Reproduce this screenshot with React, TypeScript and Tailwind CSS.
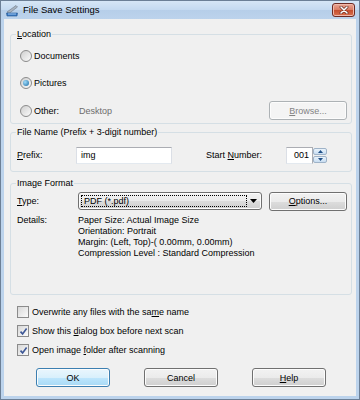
import React from 'react';

const Radio = ({ checked }: { checked?: boolean }) => (
  <span className="flex h-[12px] w-[12px] shrink-0 items-center justify-center rounded-full border border-[#8b8b8b] bg-linear-to-br from-[#cfcfcf] to-[#fbfbfb]">
    {checked && <span className="h-[6px] w-[6px] rounded-full bg-[radial-gradient(circle_at_35%_35%,#9fdcfb,#1b6aa3)]" />}
  </span>
);

const Check = ({ checked }: { checked?: boolean }) => (
  <span className="flex h-[12px] w-[12px] shrink-0 items-center justify-center border border-[#8b8b8b] bg-linear-to-br from-[#d8d8d8] to-[#fbfbfb]">
    {checked && (
      <svg width="9" height="9" viewBox="0 0 9 9">
        <path d="M1.5 4.6 L3.6 6.9 L7.6 1.6" stroke="#3d5796" strokeWidth="1.6" fill="none" />
      </svg>
    )}
  </span>
);

const Btn = ({ children, kind = 'normal', className = '' }: { children: React.ReactNode; kind?: 'normal' | 'default' | 'disabled'; className?: string }) => {
  const look =
    kind === 'default'
      ? 'border-[#3c7fb1] bg-[linear-gradient(#eaf6fd,#d9f0fc_50%,#bee6fd_50%,#a7d9f5)]'
      : kind === 'disabled'
      ? 'border-[#adb2b5] bg-[#f4f4f4] text-[#838383]'
      : 'border-[#707070] bg-[linear-gradient(#f2f2f2,#ebebeb_50%,#dddddd_50%,#cfcfcf)]';
  return (
    <div className={`flex h-[19px] items-center justify-center rounded-[3px] border shadow-[inset_0_0_0_1px_#fcfcfc] ${look} ${className}`}>
      {children}
    </div>
  );
};

const U = ({ children }: { children: React.ReactNode }) => <span className="underline underline-offset-[1px]">{children}</span>;

export default function App() {
  return (
    <div className="flex h-[400px] w-[360px] flex-col border border-[#6c7f96] bg-[#bcd3ec] font-['Liberation_Sans',Arial,sans-serif] text-[9px] leading-[12px] text-black">
      {/* Title bar */}
      <div className="flex h-[18px] items-center bg-[linear-gradient(#d6e6f6,#c4d9f0_50%,#b6cee9_50%,#bcd3ec)] pl-[4px] pr-[4px]">
        <svg width="14" height="14" viewBox="0 0 14 14">
          <path d="M2 9 L11 2.5 L12.5 4 L4 10.5 Z" fill="#a9b3bf" stroke="#6b7786" strokeWidth="0.6" />
          <path d="M1.5 10 L12.5 10 L12 13 L2 13 Z" fill="#3a78c2" stroke="#24548f" strokeWidth="0.6" />
          <path d="M3 11 L11 11" stroke="#b9dcff" strokeWidth="0.8" />
        </svg>
        <span className="ml-[4px] text-[9.5px]">File Save Settings</span>
        <div className="ml-auto flex h-[14px] w-[23px] items-center justify-center rounded-[3px] border border-[#6d2a23] bg-[linear-gradient(#e9a695,#d97a62_50%,#c44c2d_50%,#d9714f)] shadow-[inset_0_0_0_1px_#f0b9ab]">
          <svg width="10" height="8" viewBox="0 0 10 8">
            <path d="M2 1 L8 7 M8 1 L2 7" stroke="#5a2018" strokeWidth="2.8" strokeLinecap="round" />
            <path d="M2 1 L8 7 M8 1 L2 7" stroke="#ffffff" strokeWidth="1.6" strokeLinecap="round" />
          </svg>
        </div>
      </div>

      {/* Client area */}
      <div className="mx-[3px] mb-[3px] flex flex-1 flex-col bg-[#f0f0f0] pt-[9px]">
        {/* Location */}
        <fieldset className="ml-[6px] mr-[4px] rounded-[3px] border border-[#d5dfe5]">
          <legend className="ml-[5px] px-[1px]"><U>L</U>ocation</legend>
          <div className="flex flex-col gap-[9px] pb-[3px] pl-[9px] pr-[4px] pt-[7px]">
            <div className="flex h-[18px] items-center gap-[2px]"><Radio /><span>Documents</span></div>
            <div className="flex h-[18px] items-center gap-[2px]"><Radio checked /><span>Pictures</span></div>
            <div className="flex h-[19px] items-center gap-[2px]">
              <Radio />
              <span className="w-[43px]">Other:</span>
              <span className="text-[#6d6d6d]">Desktop</span>
              <Btn kind="disabled" className="ml-auto w-[78px]"><U>B</U>rowse...</Btn>
            </div>
          </div>
        </fieldset>

        {/* File name */}
        <fieldset className="ml-[6px] mr-[4px] mt-[2px] rounded-[3px] border border-[#d5dfe5]">
          <legend className="ml-[5px] px-[1px]">File Name (Prefix + 3-digit number)</legend>
          <div className="mb-[7px] mt-[8px] flex h-[18px] items-center pl-[6px]">
            <span className="w-[59px]"><U>P</U>refix:</span>
            <div className="flex h-[17px] w-[96px] items-center border border-[#abadb3] border-x-[#dbdfe6] border-b-[#e3e9ef] bg-white pl-[4px]">img</div>
            <span className="ml-[34px] w-[80px]">Start <U>N</U>umber:</span>
            <div className="flex h-[17px] w-[27px] items-center justify-end border border-[#abadb3] border-b-[#e3e9ef] border-l-[#dbdfe6] bg-white pr-[3px]">001</div>
            <div className="flex h-[17px] w-[14px] flex-col gap-[1px] py-[1px]">
              {[0, 1].map((i) => (
                <div key={i} className="flex flex-1 items-center justify-center rounded-[2px] border border-[#9fb3c8] bg-linear-to-b from-[#eaf3fb] to-[#c8ddf1]">
                  <svg width="5" height="3" viewBox="0 0 5 3">
                    <path d={i === 0 ? 'M0 3 L2.5 0 L5 3 Z' : 'M0 0 L2.5 3 L5 0 Z'} fill="#1f4f86" />
                  </svg>
                </div>
              ))}
            </div>
          </div>
        </fieldset>

        {/* Image format */}
        <fieldset className="ml-[6px] mr-[4px] mt-[5px] rounded-[3px] border border-[#d5dfe5]">
          <legend className="ml-[5px] px-[1px]">Image Format</legend>
          <div className="pb-[35px] pl-[6px] pt-[3px]">
            <div className="flex h-[18px] items-center">
              <span className="w-[61px]"><U>T</U>ype:</span>
              <div className="flex h-[18px] w-[184px] items-center rounded-[3px] border border-[#707070] bg-[linear-gradient(#f2f2f2,#ebebeb_50%,#dddddd_50%,#cfcfcf)] px-[2px] shadow-[inset_0_0_0_1px_#fcfcfc]">
                <div className="flex h-[12px] flex-1 items-center border border-dotted border-black pl-[2px]">PDF (*.pdf)</div>
                <svg className="ml-[3px] mr-[2px]" width="7" height="4" viewBox="0 0 7 4">
                  <path d="M0 0 L7 0 L3.5 4 Z" fill="#000" />
                </svg>
              </div>
              <Btn className="ml-[7px] w-[78px]"><U>O</U>ptions...</Btn>
            </div>
            <div className="mt-[5px] flex leading-[11px]">
              <span className="w-[61px]">Details:</span>
              <div className="flex flex-col">
                <span>Paper Size: Actual Image Size</span>
                <span>Orientation: Portrait</span>
                <span>Margin: (Left, Top)-( 0.00mm, 0.00mm)</span>
                <span>Compression Level : Standard Compression</span>
              </div>
            </div>
          </div>
        </fieldset>

        {/* Options */}
        <div className="mt-[9px] flex flex-col gap-[3px] pl-[13px]">
          <div className="flex h-[16px] items-center gap-[3px]"><Check /><span>Overwrite any files with the sa<U>m</U>e name</span></div>
          <div className="flex h-[16px] items-center gap-[3px]"><Check checked /><span>Show this <U>d</U>ialog box before next scan</span></div>
          <div className="flex h-[16px] items-center gap-[3px]"><Check checked /><span>Open image <U>f</U>older after scanning</span></div>
        </div>

        {/* Buttons */}
        <div className="mt-[10px] flex gap-[34px] pl-[32px]">
          <Btn kind="default" className="w-[74px]">OK</Btn>
          <Btn className="w-[74px]">Cancel</Btn>
          <Btn className="w-[74px]"><U>H</U>elp</Btn>
        </div>
      </div>
    </div>
  );
}
